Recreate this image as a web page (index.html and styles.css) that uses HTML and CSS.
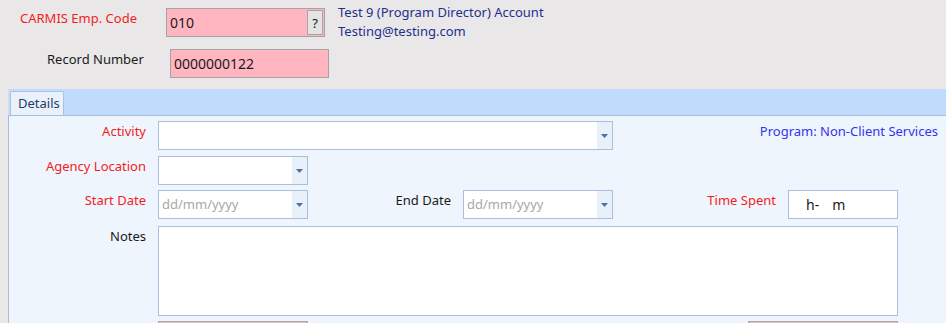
FILE: index.html
```html
<!doctype html>
<html lang="en">
<head>
    <meta charset="utf-8">
    <title>Activity Details</title>
    <link rel="stylesheet" href="styles.css">
</head>
<body>

  <div class="header">
    <div class="head-row">
      <div class="head-label required code-label">CARMIS Emp. Code</div>
      <div class="pink-box code-box">
        <span class="box-text">010</span>
        <button type="button" class="lookup-btn">?</button>
      </div>
      <div class="account">
        <div>Test 9 (Program Director) Account</div>
        <div>Testing@testing.com</div>
      </div>
    </div>
    <div class="head-row second">
      <div class="head-label record-label">Record Number</div>
      <div class="pink-box record-box">
        <span class="box-text">0000000122</span>
      </div>
    </div>
  </div>

  <div class="tabs">
    <div class="tab">Details</div>
  </div>

  <div class="panel">
    <div class="form-row">
      <div class="label required">Activity</div>
      <div class="select wide">
        <span class="select-value"></span>
        <span class="drop"><svg width="7" height="4" viewBox="0 0 7 4"><polygon points="0,0 7,0 3.5,4" fill="#4f6f9f"/></svg></span>
      </div>
      <div class="program">Program: Non-Client Services</div>
    </div>

    <div class="form-row tight">
      <div class="label required">Agency Location</div>
      <div class="select">
        <span class="select-value"></span>
        <span class="drop"><svg width="7" height="4" viewBox="0 0 7 4"><polygon points="0,0 7,0 3.5,4" fill="#4f6f9f"/></svg></span>
      </div>
    </div>

    <div class="form-row loose">
      <div class="label required">Start Date</div>
      <div class="select">
        <span class="select-value placeholder">dd/mm/yyyy</span>
        <span class="drop"><svg width="7" height="4" viewBox="0 0 7 4"><polygon points="0,0 7,0 3.5,4" fill="#4f6f9f"/></svg></span>
      </div>
      <div class="label end-label">End Date</div>
      <div class="select">
        <span class="select-value placeholder">dd/mm/yyyy</span>
        <span class="drop"><svg width="7" height="4" viewBox="0 0 7 4"><polygon points="0,0 7,0 3.5,4" fill="#4f6f9f"/></svg></span>
      </div>
      <div class="label required time-label">Time Spent</div>
      <div class="time-box"><span>h-</span><span>m</span></div>
    </div>

    <div class="form-row tight">
      <div class="label">Notes</div>
      <div class="notes" contenteditable="true"></div>
    </div>

    <div class="form-row">
      <div class="label"></div>
      <div class="pink-box small"></div>
      <div class="pink-box small right"></div>
    </div>
  </div>

</body>
</html>
```

FILE: styles.css
```css
html, body {
  height: 100%;
  overflow: hidden;
}

body {
  margin: 0;
  background-color: #e9e7e8;
  font-family: "Noto Sans", "Open Sans", sans-serif;
  font-size: 13px;
  color: #1a1a1a;
}

.required {
  color: #f21d1d;
}

/* header */
.header {
  height: 89px;
  padding-top: 8px;
  box-sizing: border-box;
}

.head-row {
  display: flex;
  align-items: flex-start;
  height: 29px;
}

.head-row.second {
  margin-top: 12px;
}

.head-label {
  line-height: 20px;
}

.code-label {
  padding-left: 20px;
  width: 146px;
}

.record-label {
  padding-left: 47px;
  width: 123px;
}

.pink-box {
  background-color: #ffb6c1;
  border: 1px solid #a3a3a3;
  box-sizing: border-box;
  height: 29px;
  display: flex;
  align-items: center;
  flex-shrink: 0;
}

.code-box {
  width: 159px;
  padding-right: 1px;
}

.record-box {
  width: 159px;
}

.box-text {
  flex: 1;
  padding-left: 3px;
  font-size: 14px;
}

.lookup-btn {
  width: 16px;
  height: 25px;
  padding: 0;
  border: 1px solid #a6a6a6;
  background-color: #e4e4e4;
  font-family: inherit;
  font-size: 13px;
  color: #111;
}

.account {
  margin-left: 13px;
  margin-top: -5px;
  color: #1f2f8f;
  line-height: 19px;
}

/* tab strip */
.tabs {
  margin-left: 8px;
  height: 26px;
  background-color: #c1dbfc;
  border-left: 1px solid #d4dde9;
  display: flex;
  align-items: flex-end;
  box-sizing: border-box;
}

.tab {
  margin-left: 1px;
  width: 54px;
  height: 24px;
  box-sizing: border-box;
  background-color: #e9f1fb;
  border: 1px solid #a9c3e6;
  border-bottom: none;
  border-radius: 2px 2px 0 0;
  color: #1f3d6c;
  padding-left: 7px;
  line-height: 23px;
}

/* panel */
.panel {
  margin-left: 8px;
  height: 208px;
  background-color: #eef5fd;
  border-left: 1px solid #a9bcd8;
  border-top: 1px solid #a9bcd8;
  padding-top: 5px;
  box-sizing: border-box;
  overflow: hidden;
}

.form-row {
  display: flex;
  align-items: flex-start;
  margin-bottom: 6px;
}

.form-row.tight {
  margin-bottom: 5px;
}

.form-row.loose {
  margin-bottom: 7px;
}

.label {
  width: 137px;
  margin-right: 12px;
  text-align: right;
  line-height: 20px;
  flex-shrink: 0;
}

.end-label {
  width: 143px;
}

.time-label {
  width: 163px;
}

.select {
  width: 150px;
  height: 29px;
  box-sizing: border-box;
  border: 1px solid #a9bfdf;
  background-color: #fff;
  display: flex;
  flex-shrink: 0;
}

.select.wide {
  width: 455px;
}

.select-value {
  flex: 1;
  padding-left: 3px;
  line-height: 27px;
}

.placeholder {
  color: #a8a8a8;
}

.drop {
  width: 15px;
  background-color: #e8f0fa;
  display: flex;
  align-items: center;
  justify-content: center;
}

.program {
  margin-left: auto;
  margin-right: 8px;
  color: #3434ee;
  line-height: 20px;
}

.time-box {
  width: 110px;
  height: 29px;
  box-sizing: border-box;
  border: 1px solid #a9bfdf;
  background-color: #fff;
  display: flex;
  align-items: center;
  padding-left: 17px;
  gap: 13px;
  font-size: 14px;
}

.notes {
  width: 740px;
  height: 90px;
  box-sizing: border-box;
  border: 1px solid #a9bfdf;
  background-color: #fff;
}

.pink-box.small {
  width: 150px;
  border-color: #a7a7a7;
}

.pink-box.right {
  margin-left: 440px;
}
```
